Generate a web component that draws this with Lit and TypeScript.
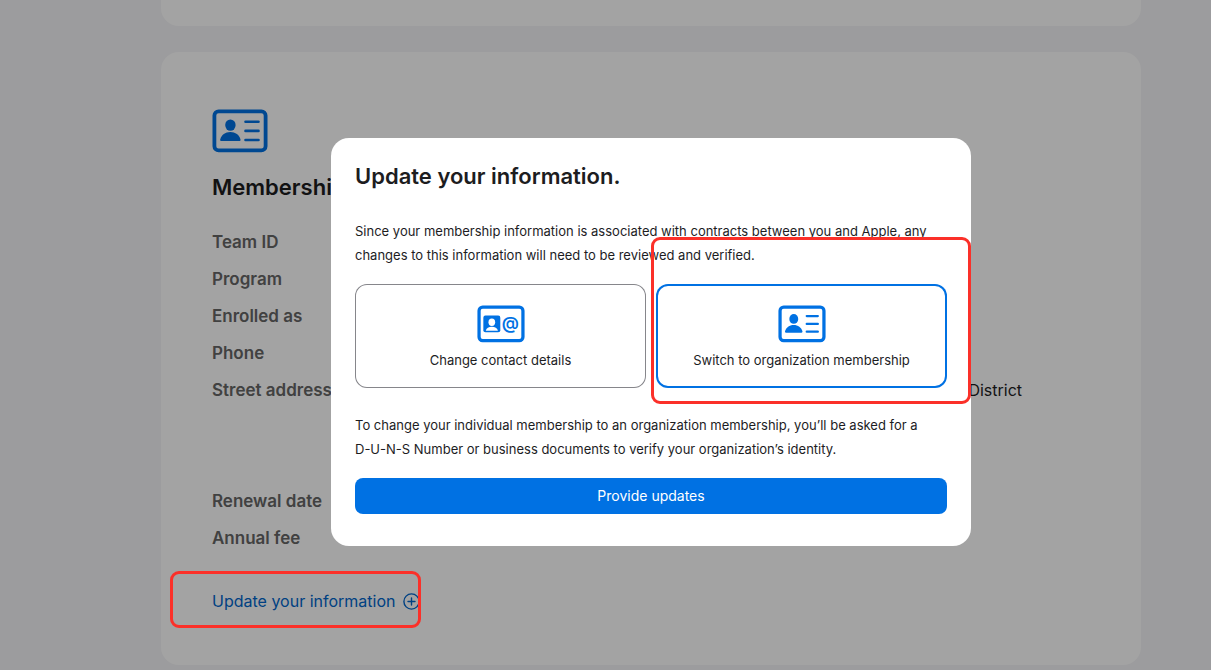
import { LitElement, html, css, svg } from "lit";
import { customElement, property, state } from "lit/decorators.js";

@customElement("card-icon")
class CardIcon extends LitElement {
  @property() variant = "person";

  static styles = css`
    :host { display: block; }
    .icon { display: block; width: 100%; height: 100%; }
    .frame { fill: none; stroke: currentColor; stroke-width: 3.8; }
    .fill { fill: currentColor; }
    .paper { fill: #fff; }
    .line { stroke: currentColor; stroke-width: 2.6; stroke-linecap: round; }
    .at { fill: currentColor; font: 600 20px Inter, sans-serif; text-anchor: middle; }
  `;

  render() {
    return html`<svg class="icon" viewBox="0 0 56 44" aria-hidden="true">
      <rect class="frame" x="2.4" y="2.4" width="51.2" height="39" rx="4.2" />
      ${this.variant === "person"
        ? svg`
          <ellipse class="fill" cx="18.4" cy="16.1" rx="5.2" ry="5.7" />
          <path class="fill" d="M9.3 32.1c-.9 0-1.3-.6-1.1-1.5C9.3 26 13.3 23.1 18.3 23.1s9.1 2.9 10.2 7.5c.2.9-.2 1.5-1.1 1.5z" />
          <path class="line" d="M33.5 12.8h13M33.5 21.9h13M33.5 31h13" />`
        : svg`
          <rect class="fill" x="7.4" y="12.2" width="19.8" height="19.4" rx="2.4" />
          <ellipse class="paper" cx="17.3" cy="19.9" rx="3.9" ry="4.3" />
          <path class="paper" d="M10.2 30c.6-2.9 3.5-4.7 7.1-4.7s6.5 1.8 7.1 4.7z" />
          <text class="at" x="39" y="28.4">@</text>`}
    </svg>`;
  }
}

@customElement("app-root")
class AppRoot extends LitElement {
  @state() choice = "organization";

  static styles = css`
    :host {
      display: block;
      height: 100vh;
      overflow: hidden;
      background: #f5f5f7;
      color: #1d1d1f;
      font: 16px/25px Inter, "Helvetica Neue", sans-serif;
    }
    * { box-sizing: border-box; }
    h1, h2, p, dl, dd, fieldset { margin: 0; padding: 0; border: 0; min-width: 0; }
    .page {
      display: flex;
      flex-direction: column;
      align-items: center;
      gap: 26px;
      padding-left: 91px;
    }
    .card { width: 100%; max-width: 980px; background: #fff; border-radius: 18px; }
    .previous { height: 26px; border-radius: 0 0 18px 18px; }
    .membership { padding: 57px 51px 51px; }
    .card-icon { width: 56px; height: 44px; color: #0071e3; }
    .card-title { margin-top: 18px; font-size: 22px; line-height: 32px; font-weight: 600; }
    .details { display: grid; gap: 12px; margin-top: 27px; }
    .row { display: flex; justify-content: space-between; }
    .row dt { color: #666; font-size: 17px; font-weight: 600; }
    .address { min-height: 99px; padding-right: 68px; }
    .update {
      position: relative;
      display: flex;
      width: max-content;
      align-items: center;
      gap: 8px;
      margin-top: 38px;
      color: #06c;
      text-decoration: none;
    }
    .plus { width: 17px; height: 17px; fill: none; stroke: currentColor; stroke-width: 1.4; stroke-linecap: round; }
    .mark { position: absolute; border: 3px solid #fb3029; border-radius: 9px; pointer-events: none; z-index: 2; }
    .mark-link { inset: -18px -1px -14px -42px; }
    .mark-option { inset: -47px -24px -16px -5px; }
    .backdrop {
      position: fixed;
      inset: 0;
      z-index: 1;
      display: flex;
      align-items: center;
      justify-content: center;
      padding: 14px 0 0 91px;
      background: rgba(0, 0, 0, 0.36);
    }
    .dialog {
      width: 100%;
      max-width: 640px;
      padding: 24px 24px 32px;
      border-radius: 18px;
      background: #fff;
      font-size: 13px;
      line-height: 24px;
    }
    .dialog-title { margin-bottom: 29px; font-size: 22px; line-height: 28px; font-weight: 600; }
    .nowrap { white-space: nowrap; }
    .options { display: grid; grid-template-columns: 1fr 1fr; gap: 10px; margin: 17px 0 25px; }
    .option {
      position: relative;
      display: flex;
      flex-direction: column;
      align-items: center;
      gap: 5px;
      height: 104px;
      padding-top: 21px;
      border-radius: 12px;
      box-shadow: inset 0 0 0 1px #86868b;
      cursor: pointer;
    }
    .selected { box-shadow: inset 0 0 0 2px #0071e3; }
    .radio { position: absolute; inset: 0; width: 100%; height: 100%; margin: 0; opacity: 0; }
    .option-icon { width: 48px; height: 38px; color: #0071e3; }
    .submit {
      display: block;
      width: 100%;
      height: 36px;
      margin-top: 17px;
      border: 0;
      border-radius: 8px;
      background: #0071e3;
      color: #fff;
      font: inherit;
      font-size: 14px;
    }
  `;

  option(value: string, icon: string, label: string) {
    const selected = this.choice === value;
    return html`<label class="option ${selected ? "selected" : ""}">
      <input class="radio" type="radio" name="update" .checked=${selected}
        @change=${() => (this.choice = value)} />
      <card-icon class="option-icon" variant=${icon}></card-icon>
      <span>${label}</span>
      ${selected ? html`<span class="mark mark-option"></span>` : ""}
    </label>`;
  }

  render() {
    return html`
      <main class="page">
        <section class="card previous"></section>
        <section class="card membership">
          <card-icon class="card-icon"></card-icon>
          <h1 class="card-title">Membership</h1>
          <dl class="details">
            ${["Team ID", "Program", "Enrolled as", "Phone"].map(
              (name) => html`<div class="row"><dt>${name}</dt></div>`
            )}
            <div class="row"><dt>Street address</dt><dd class="address">District</dd></div>
            ${["Renewal date", "Annual fee"].map(
              (name) => html`<div class="row"><dt>${name}</dt></div>`
            )}
          </dl>
          <a class="update" href="#">
            Update your information
            <svg class="plus" viewBox="0 0 17 17" aria-hidden="true">
              <circle cx="8.5" cy="8.5" r="7.6" />
              <path d="M8.5 5v7M5 8.5h7" />
            </svg>
            <span class="mark mark-link"></span>
          </a>
        </section>
      </main>
      <div class="backdrop">
        <section class="dialog" role="dialog" aria-modal="true" aria-labelledby="dialog-title">
          <h2 class="dialog-title" id="dialog-title">Update your information.</h2>
          <p>Since your membership information is associated with contracts between you and Apple, any changes to this information will need to be reviewed and verified.</p>
          <fieldset class="options" aria-label="Type of update">
            ${this.option("contact", "contact", "Change contact details")}
            ${this.option("organization", "person", "Switch to organization membership")}
          </fieldset>
          <p>To change your individual membership to an organization membership, you’ll be asked for a <span class="nowrap">D-U-N-S</span> Number or business documents to verify your organization’s identity.</p>
          <button class="submit" type="button">Provide updates</button>
        </section>
      </div>
    `;
  }
}
